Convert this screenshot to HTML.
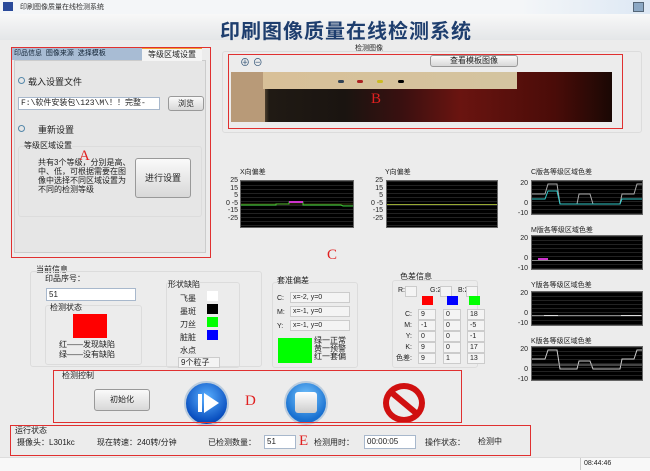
<!DOCTYPE html>
<html><head><meta charset="utf-8"><style>
*{margin:0;padding:0;box-sizing:border-box}
body{width:650px;height:471px;position:relative;overflow:hidden;background:#ececec;font-family:"Liberation Sans","Noto Sans CJK SC",sans-serif;font-size:8px;color:#222}
.a{position:absolute}
.rb{position:absolute;border:1.5px solid #e03030}
.gb{position:absolute;border:1px solid #dcdcdc;border-radius:3px}
.in{position:absolute;background:#fff;border:1px solid #a8b8cc;font-size:8px;padding-left:2px;line-height:12px}
.ro{position:absolute;background:#f4f4f4;border:1px solid #ccc;font-size:7px;line-height:9px;padding-left:2px;height:11px}
.btn{position:absolute;background:linear-gradient(#fafafa,#d8d8d8);border:1px solid #999;border-radius:3px;text-align:center}
.chart{position:absolute;background:#000;border:1px solid #666;background-image:linear-gradient(#222 1px,transparent 1px);background-size:100% 4px}
.red{color:#e02020;font-family:"Liberation Serif",serif;font-size:15px}
</style></head><body>
<div class="a" style="left:0;top:0;width:650px;height:14px;background:linear-gradient(90deg,#f4f6f8,#f4f6f8 80%,#dde8f4)"></div>
<div class="a" style="left:3px;top:2px;width:10px;height:9px;background:#2a4a9a"></div>
<div class="a" style="left:20px;top:2px;font-size:7px;color:#333">印刷图像质量在线检测系统</div>
<div class="a" style="left:633px;top:2px;width:11px;height:10px;background:#8ca8c4;border:1px solid #567"></div>
<div class="a" style="left:0;top:14px;width:650px;height:26px;background:linear-gradient(#f8f8f8,#e4e6e8)"></div>
<div class="a" style="left:220px;top:15px;font-size:20px;font-weight:bold;color:#1e3e6e;letter-spacing:1px">印刷图像质量在线检测系统</div>

<!-- A panel -->
<div class="a" style="left:14px;top:60px;width:192px;height:193px;background:#e6e6e6;border:1px solid #ccc"></div>
<div class="a" style="left:12px;top:48px;width:130px;height:12px;background:#a8bcd4;font-size:7px;line-height:12px;color:#123">&nbsp;印品信息 &nbsp;图像来源 &nbsp;选择模板</div>
<div class="a" style="left:142px;top:47px;width:60px;height:14px;background:#f4f4f4;border-top:2px solid #f0a030;font-size:8px;line-height:12px;text-align:center">等级区域设置</div>
<div class="a" style="left:18px;top:77px;width:7px;height:7px;border:1px solid #58a;border-radius:50%"></div>
<div class="a" style="left:28px;top:75px;font-size:9px">载入设置文件</div>
<div class="in" style="left:18px;top:97px;width:142px;height:13px;font-family:'Liberation Mono','Noto Sans CJK SC',monospace;font-size:8px">F:\软件安装包\123\M\！！完整-</div>
<div class="btn" style="left:168px;top:96px;width:36px;height:15px;line-height:13px">浏览</div>
<div class="a" style="left:18px;top:125px;width:7px;height:7px;border:1px solid #58a;border-radius:50%"></div>
<div class="a" style="left:38px;top:123px;font-size:9px">重新设置</div>
<div class="gb" style="left:18px;top:146px;width:184px;height:71px"></div>
<div class="a" style="left:24px;top:140px;font-size:8px;background:#e6e6e6">等级区域设置</div>
<div class="a" style="left:38px;top:158px;width:95px;font-size:8px;line-height:9px">共有3个等级，分别是高、中、低，可根据需要在图像中选择不同区域设置为不同的检测等级</div>
<div class="btn" style="left:135px;top:158px;width:56px;height:40px;line-height:38px;font-size:9px">进行设置</div>
<div class="a red" style="left:79px;top:148px">A</div>
<div class="rb" style="left:11px;top:47px;width:200px;height:211px"></div>

<!-- B panel -->
<div class="a" style="left:355px;top:43px;font-size:7px">检测图像</div>
<div class="gb" style="left:222px;top:51px;width:420px;height:82px"></div>
<div class="a" style="left:240px;top:54px;font-size:10px;color:#357">⊕ ⊖</div>
<div class="btn" style="left:430px;top:55px;width:88px;height:12px;line-height:10px;font-size:8px">查看模板图像</div>
<div class="a" style="left:231px;top:72px;width:381px;height:50px;background:linear-gradient(90deg,#c8b090 0,#c0a070 6%,#201a14 10%,#1a1410 30%,#3a1010 45%,#6a1410 60%,#4a0c08 85%,#1a0804 100%)"></div>
<div class="a" style="left:231px;top:72px;width:34px;height:50px;background:#b89a78"></div>
<div class="a" style="left:263px;top:72px;width:254px;height:17px;background:linear-gradient(90deg,#d8c098,#d4c4a0)"></div>
<div class="a" style="left:338px;top:80px;width:6px;height:3px;background:#345;border-radius:2px"></div>
<div class="a" style="left:357px;top:80px;width:6px;height:3px;background:#a22;border-radius:2px"></div>
<div class="a" style="left:377px;top:80px;width:6px;height:3px;background:#cb2;border-radius:2px"></div>
<div class="a" style="left:398px;top:80px;width:6px;height:3px;background:#000;border-radius:2px"></div>
<div class="a red" style="left:371px;top:91px">B</div>
<div class="rb" style="left:228px;top:54px;width:395px;height:75px"></div>

<!-- charts -->
<div class="a" style="left:240px;top:167px;font-size:7px">X向偏差</div>
<div class="a" style="left:218px;top:177px;font-size:7px;line-height:7.5px;text-align:right;width:20px">25<br>15<br>5<br>0 -5<br>-15<br>-25</div>
<div class="chart" style="left:240px;top:180px;width:114px;height:48px"><svg width="112" height="46" class="a" style="left:0;top:0"><polyline points="0,24 35,24 35,23 48,23 48,21 62,21 62,24 100,24 102,25 112,25" fill="none" stroke="#3c3" stroke-width="1"/><polyline points="48,21 62,21" stroke="#c3c" stroke-width="2"/><polyline points="0,23 112,23" stroke="#aa3" stroke-width="0.6" opacity=".7"/></svg></div>
<div class="a" style="left:385px;top:167px;font-size:7px">Y向偏差</div>
<div class="a" style="left:363px;top:177px;font-size:7px;line-height:7.5px;text-align:right;width:20px">25<br>15<br>5<br>0 -5<br>-15<br>-25</div>
<div class="chart" style="left:386px;top:180px;width:112px;height:48px"><div class="a" style="left:0;top:23px;width:110px;height:1px;background:#9a3"></div></div>

<div class="a" style="left:531px;top:167px;font-size:7px">C版各等级区域色差</div>
<div class="a" style="left:514px;top:179px;font-size:7px;line-height:10px;text-align:right;width:14px">20<br><br>0<br>-10</div>
<div class="chart" style="left:531px;top:180px;width:112px;height:35px"><svg width="110" height="33" class="a"><polyline points="0,13 13,13 16,3 25,3 28,23 45,23 47,13 58,13 61,23 88,23 90,13 102,13 105,3 110,3" fill="none" stroke="#aaa"/><polyline points="0,18 13,18 16,10 25,10 28,23 75,23 88,23 90,18 110,18" fill="none" stroke="#3cc"/></svg></div>
<div class="a" style="left:531px;top:225px;font-size:7px">M版各等级区域色差</div>
<div class="a" style="left:514px;top:234px;font-size:7px;line-height:10px;text-align:right;width:14px">20<br><br>0<br>-10</div>
<div class="chart" style="left:531px;top:235px;width:112px;height:35px"><div class="a" style="left:0;top:24px;width:110px;height:1px;background:#888"></div><div class="a" style="left:6px;top:22px;width:10px;height:2px;background:#c3c"></div></div>
<div class="a" style="left:531px;top:280px;font-size:7px">Y版各等级区域色差</div>
<div class="a" style="left:514px;top:289px;font-size:7px;line-height:10px;text-align:right;width:14px">20<br><br>0<br>-10</div>
<div class="chart" style="left:531px;top:291px;width:112px;height:35px"><div class="a" style="left:0;top:23px;width:110px;height:1px;background:#888"></div><div class="a" style="left:12px;top:23px;width:14px;height:1px;background:#ddd"></div><div class="a" style="left:89px;top:23px;width:20px;height:1px;background:#ddd"></div></div>
<div class="a" style="left:531px;top:336px;font-size:7px">K版各等级区域色差</div>
<div class="a" style="left:514px;top:345px;font-size:7px;line-height:10px;text-align:right;width:14px">20<br><br>0<br>-10</div>
<div class="chart" style="left:531px;top:346px;width:112px;height:35px"><svg width="110" height="33" class="a"><polyline points="0,12 13,12 16,3 25,3 28,22 45,22 47,14 58,14 61,22 88,22 90,12 102,12 105,3 110,3" fill="none" stroke="#ccc"/><polyline points="0,18 110,18" stroke="#888"/></svg></div>
<div class="a red" style="left:327px;top:247px">C</div>

<!-- info -->
<div class="a" style="left:36px;top:264px;font-size:8px">当前信息</div>
<div class="gb" style="left:30px;top:271px;width:232px;height:96px"></div>
<div class="a" style="left:45px;top:273px;font-size:8px">印品序号：</div>
<div class="in" style="left:46px;top:288px;width:90px;height:13px">51</div>
<div class="gb" style="left:45px;top:305px;width:97px;height:60px"></div>
<div class="a" style="left:50px;top:302px;font-size:8px">检测状态</div>
<div class="a" style="left:73px;top:314px;width:34px;height:24px;background:#f00"></div>
<div class="a" style="left:59px;top:340px;font-size:8px;line-height:10px">红——发现缺陷<br>绿——没有缺陷</div>
<div class="gb" style="left:166px;top:282px;width:74px;height:86px"></div>
<div class="a" style="left:168px;top:279px;font-size:8px">形状缺陷</div>
<div class="a" style="left:180px;top:292px;font-size:8px;line-height:13px">飞墨<br>墨斑<br>刀丝<br>脏脏<br>水点</div>
<div class="a" style="left:207px;top:291px;width:11px;height:10px;background:#fff"></div>
<div class="a" style="left:207px;top:304px;width:11px;height:10px;background:#000"></div>
<div class="a" style="left:207px;top:317px;width:11px;height:10px;background:#0f0"></div>
<div class="a" style="left:207px;top:330px;width:11px;height:10px;background:#00f"></div>
<div class="ro" style="left:178px;top:357px;width:42px;height:11px;font-size:8px">9个粒子</div>
<div class="gb" style="left:272px;top:282px;width:86px;height:86px"></div>
<div class="a" style="left:277px;top:275px;font-size:8px">套准偏差</div>
<div class="a" style="left:277px;top:292px;font-size:7px;line-height:14px">C:<br>M:<br>Y:</div>
<div class="ro" style="left:290px;top:292px;width:60px">x=-2, y=0</div>
<div class="ro" style="left:290px;top:306px;width:60px">x=-1, y=0</div>
<div class="ro" style="left:290px;top:320px;width:60px">x=-1, y=0</div>
<div class="a" style="left:278px;top:338px;width:34px;height:25px;background:#0f0"></div>
<div class="a" style="left:314px;top:337px;font-size:8px;line-height:8px">绿一正常<br>黄一预警<br>红一套偏</div>
<div class="gb" style="left:392px;top:280px;width:86px;height:88px"></div>
<div class="a" style="left:400px;top:271px;font-size:8px">色差信息</div>
<div class="a" style="left:398px;top:287px;font-size:7px">R:0</div><div class="ro" style="left:405px;top:286px;width:12px"></div>
<div class="a" style="left:430px;top:287px;font-size:7px">G:2</div><div class="ro" style="left:440px;top:286px;width:12px"></div>
<div class="a" style="left:458px;top:287px;font-size:7px">B:2</div><div class="ro" style="left:466px;top:286px;width:12px"></div>
<div class="a" style="left:422px;top:296px;width:11px;height:9px;background:#f00"></div>
<div class="a" style="left:447px;top:296px;width:11px;height:9px;background:#00f"></div>
<div class="a" style="left:469px;top:296px;width:11px;height:9px;background:#0f0"></div>
<div class="a" style="left:396px;top:309px;font-size:7px;line-height:11px;text-align:right;width:16px">C:<br>M:<br>Y:<br>K:<br>色差:</div>
<div class="ro" style="left:418px;top:309px;width:18px">9</div><div class="ro" style="left:443px;top:309px;width:18px">0</div><div class="ro" style="left:467px;top:309px;width:18px">18</div>
<div class="ro" style="left:418px;top:320px;width:18px">-1</div><div class="ro" style="left:443px;top:320px;width:18px">0</div><div class="ro" style="left:467px;top:320px;width:18px">-5</div>
<div class="ro" style="left:418px;top:331px;width:18px">0</div><div class="ro" style="left:443px;top:331px;width:18px">0</div><div class="ro" style="left:467px;top:331px;width:18px">-1</div>
<div class="ro" style="left:418px;top:342px;width:18px">9</div><div class="ro" style="left:443px;top:342px;width:18px">0</div><div class="ro" style="left:467px;top:342px;width:18px">17</div>
<div class="ro" style="left:418px;top:353px;width:18px">9</div><div class="ro" style="left:443px;top:353px;width:18px">1</div><div class="ro" style="left:467px;top:353px;width:18px">13</div>

<!-- D -->
<div class="a" style="left:62px;top:370px;font-size:8px">检测控制</div>
<div class="btn" style="left:94px;top:389px;width:56px;height:22px;line-height:20px;font-size:8px">初始化</div>
<div class="a" style="left:184px;top:381px;width:45px;height:45px;border-radius:50%;background:radial-gradient(circle at 50% 35%,#5ab0ff,#0a50c0 70%,#063080);border:2px solid #bcd"></div>
<div class="a" style="left:198px;top:394px;width:4px;height:18px;background:#fff"></div>
<div class="a" style="left:204px;top:393px;width:0;height:0;border-top:10px solid transparent;border-bottom:10px solid transparent;border-left:15px solid #fff"></div>
<div class="a red" style="left:245px;top:393px">D</div>
<div class="a" style="left:284px;top:381px;width:44px;height:44px;border-radius:50%;background:radial-gradient(circle at 50% 35%,#7ac8ff,#1870d0 70%);border:2px solid #bcd"></div>
<div class="a" style="left:295px;top:392px;width:22px;height:21px;background:linear-gradient(#fff,#ccc);border-radius:3px"></div>
<div class="a" style="left:383px;top:383px;width:42px;height:40px;border-radius:50%;border:6px solid #d01010"></div>
<div class="a" style="left:386px;top:400px;width:36px;height:6px;background:#d01010;transform:rotate(40deg)"></div>
<div class="rb" style="left:53px;top:370px;width:409px;height:53px"></div>

<!-- E -->
<div class="a" style="left:15px;top:425px;font-size:8px">运行状态</div>
<div class="a" style="left:17px;top:437px;font-size:8px">摄像头：L301kc</div>
<div class="a" style="left:97px;top:437px;font-size:8px">现在转速：240转/分钟</div>
<div class="a" style="left:208px;top:437px;font-size:8px">已检测数量：</div>
<div class="in" style="left:264px;top:435px;width:32px;height:14px">51</div>
<div class="a red" style="left:299px;top:433px">E</div>
<div class="a" style="left:314px;top:437px;font-size:8px">检测用时：</div>
<div class="in" style="left:364px;top:435px;width:52px;height:14px">00:00:05</div>
<div class="a" style="left:425px;top:437px;font-size:8px">操作状态：</div>
<div class="a" style="left:478px;top:436px;font-size:8px">检测中</div>
<div class="rb" style="left:10px;top:425px;width:521px;height:31px"></div>

<div class="a" style="left:0;top:457px;width:650px;height:14px;background:#f8f8f8;border-top:1px solid #ddd"></div>
<div class="a" style="left:580px;top:458px;width:70px;height:12px;border-left:1px solid #ccc;font-size:7px;padding-left:3px;line-height:12px">08:44:46</div>
</body></html>
